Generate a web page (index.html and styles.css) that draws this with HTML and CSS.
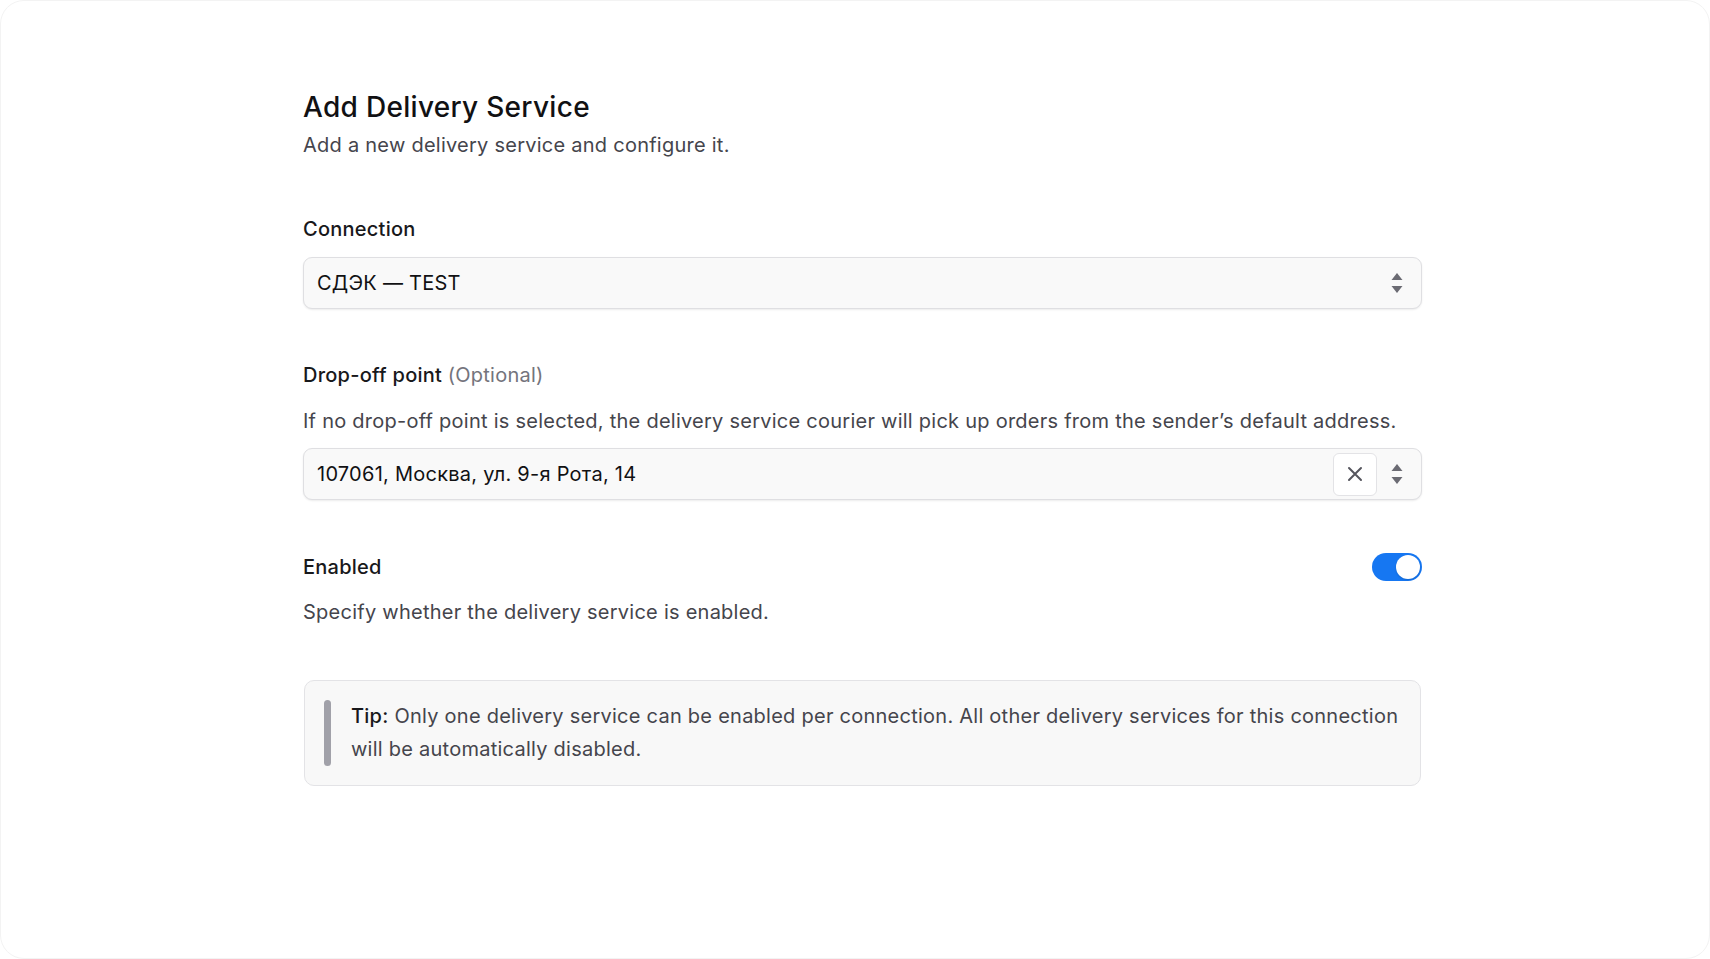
FILE: index.html
```html
<!DOCTYPE html>
<html lang="en">
<head>
    <meta charset="UTF-8">
    <meta name="viewport" content="width=device-width, initial-scale=1.0">
    <title>Add Delivery Service</title>
    <link rel="stylesheet" href="styles.css">
</head>
<body>
    <div class="page">
        <form class="form">
            <header class="form-header">
                <h1>Add Delivery Service</h1>
                <p class="subtitle">Add a new delivery service and configure it.</p>
            </header>

            <div class="field field-connection">
                <label class="field-label">Connection</label>
                <div class="control">
                    <span class="control-value">СДЭК — TEST</span>
                    <svg class="sort-icon" width="12" height="22" viewBox="0 0 12 22">
                        <path d="M6 1 L11.5 8 H0.5 Z" fill="#6b6b73"/>
                        <path d="M6 21 L11.5 14 H0.5 Z" fill="#6b6b73"/>
                    </svg>
                </div>
            </div>

            <div class="field field-dropoff">
                <label class="field-label">Drop-off point <span class="optional">(Optional)</span></label>
                <p class="field-help">If no drop-off point is selected, the delivery service courier will pick up orders from the sender’s default address.</p>
                <div class="control">
                    <span class="control-value">107061, Москва, ул. 9-я Рота, 14</span>
                    <button type="button" class="clear-btn">
                        <svg width="16" height="16" viewBox="0 0 16 16">
                            <path d="M2 2 L14 14 M14 2 L2 14" stroke="#55555d" stroke-width="2" stroke-linecap="round"/>
                        </svg>
                    </button>
                    <svg class="sort-icon" width="12" height="22" viewBox="0 0 12 22">
                        <path d="M6 1 L11.5 8 H0.5 Z" fill="#6b6b73"/>
                        <path d="M6 21 L11.5 14 H0.5 Z" fill="#6b6b73"/>
                    </svg>
                </div>
            </div>

            <div class="field field-enabled">
                <div class="switch-row">
                    <label class="field-label">Enabled</label>
                    <span class="switch on"><span class="knob"></span></span>
                </div>
                <p class="field-help">Specify whether the delivery service is enabled.</p>
            </div>

            <div class="tip">
                <span class="tip-bar"></span>
                <p class="tip-text"><strong>Tip:</strong> Only one delivery service can be enabled per connection. All other delivery services for this connection will be automatically disabled.</p>
            </div>
        </form>
    </div>
</body>
</html>
```

FILE: styles.css
```css
* {
    margin: 0;
    padding: 0;
    box-sizing: border-box;
    font-family: Inter, "Noto Sans", sans-serif;
}

body {
    background: #fff;
    height: 100vh;
    border: 1px solid #f3f3f3;
    border-radius: 24px;
    color: #3f3f46;
}

.page {
    padding: 88px 0 0 302px;
}

.form {
    width: 1119px;
    letter-spacing: 0.25px;
}

h1 {
    font-size: 28px;
    line-height: 36px;
    font-weight: 500;
    letter-spacing: 0.3px;
    color: #111113;
}

.subtitle {
    margin-top: 6px;
    font-size: 20px;
    line-height: 28px;
    color: #45454c;
}

.field-label {
    display: block;
    font-size: 20px;
    line-height: 28px;
    font-weight: 500;
    color: #18181b;
}

.optional {
    font-weight: 400;
    color: #74747c;
}

.field-help {
    font-size: 20px;
    line-height: 28px;
    color: #45454c;
}

.field-connection {
    margin-top: 56px;
}

.field-dropoff {
    margin-top: 52px;
}

.field-enabled {
    margin-top: 53px;
}

.field-connection .control {
    margin-top: 14px;
}

.field-dropoff .field-help {
    margin-top: 18px;
}

.field-dropoff .control {
    margin-top: 13px;
}

.field-enabled .field-help {
    margin-top: 17px;
}

.control {
    display: flex;
    align-items: center;
    height: 52px;
    padding: 0 18px 0 13px;
    background: #f9f9f9;
    border: 1px solid #dfdfe2;
    border-radius: 9px;
    box-shadow: 0 1px 2px rgba(0, 0, 0, 0.08);
}

.control-value {
    flex: 1;
    font-size: 20px;
    line-height: 28px;
    color: #111113;
}

.sort-icon {
    display: block;
    flex-shrink: 0;
}

.clear-btn {
    display: flex;
    align-items: center;
    justify-content: center;
    width: 44px;
    height: 43px;
    margin-right: 14px;
    background: #fff;
    border: 1px solid #e3e3e6;
    border-radius: 6px;
    cursor: pointer;
}

.switch-row {
    display: flex;
    justify-content: space-between;
    align-items: center;
}

.switch {
    display: flex;
    align-items: center;
    width: 50px;
    height: 28px;
    padding: 2px;
    border-radius: 14px;
    background: #d4d4d8;
}

.switch.on {
    background: #1677f2;
    justify-content: flex-end;
}

.knob {
    width: 24px;
    height: 24px;
    border-radius: 50%;
    background: #fff;
    box-shadow: 0 1px 2px rgba(0, 0, 0, 0.15);
}

.tip {
    display: flex;
    gap: 20px;
    margin: 54px 1px 0;
    padding: 19px 18px 19px 19px;
    background: #f8f8f8;
    border: 1px solid #e3e3e6;
    border-radius: 10px;
}

.tip-bar {
    flex-shrink: 0;
    width: 7px;
    border-radius: 4px;
    background: #a1a1a9;
}

.tip-text {
    font-size: 20px;
    line-height: 33px;
    color: #45454c;
}

.tip-text strong {
    font-weight: 500;
    color: #18181b;
}
```
